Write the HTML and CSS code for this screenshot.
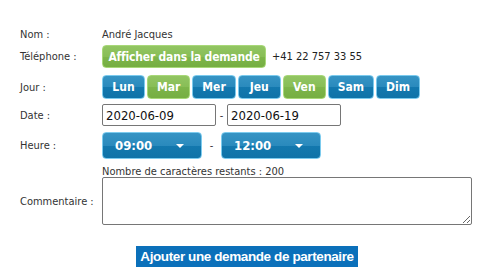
FILE: index.html
```html
<!DOCTYPE html>
<html>
<head>
  <meta charset="UTF-8" />
  <link rel="stylesheet" href="styles.css">
</head>
<body>
  <form class="demande" onsubmit="return false;">
    <div class="row row-nom">
      <span class="label">Nom :</span>
      <span class="value">André Jacques</span>
    </div>
    <div class="row row-tel">
      <span class="label">Téléphone :</span>
      <button type="button" class="btn green btn-tel">Afficher dans la demande</button>
      <span class="value phone">+41 22 757 33 55</span>
    </div>
    <div class="row row-jour">
      <span class="label">Jour :</span>
      <div class="days">
        <button type="button" class="btn blue day">Lun</button>
        <button type="button" class="btn green day">Mar</button>
        <button type="button" class="btn blue day">Mer</button>
        <button type="button" class="btn blue day">Jeu</button>
        <button type="button" class="btn green day">Ven</button>
        <button type="button" class="btn blue day">Sam</button>
        <button type="button" class="btn blue day">Dim</button>
      </div>
    </div>
    <div class="row row-date">
      <span class="label">Date :</span>
      <input type="text" class="date" value="2020-06-09">
      <span class="sep">-</span>
      <input type="text" class="date" value="2020-06-19">
    </div>
    <div class="row row-heure">
      <span class="label">Heure :</span>
      <div class="btn blue select"><span>09:00</span><span class="arrow"></span></div>
      <span class="sep sep-heure">-</span>
      <div class="btn blue select"><span>12:00</span><span class="arrow"></span></div>
    </div>
    <div class="row row-count">
      <span class="label"></span>
      <span class="value">Nombre de caractères restants : 200</span>
    </div>
    <div class="row row-comment">
      <span class="label">Commentaire :</span>
      <textarea class="comment"></textarea>
    </div>
    <div class="submit-wrap">
      <button type="submit" class="submit">Ajouter une demande de partenaire</button>
    </div>
  </form>
</body>
</html>
```

FILE: styles.css
```css
body {
    margin: 0;
    background-color: #fff;
    font-family: "DejaVu Sans Condensed", "DejaVu Sans", sans-serif;
    font-size: 11px;
    color: #333;
}

.demande {
    padding: 23px 0 0 20px;
}

.row {
    display: flex;
    align-items: center;
}

.label {
    width: 82px;
    flex: none;
}

.value {
    color: #333;
}

.row-nom {
    height: 22px;
}

.row-tel {
    height: 23px;
}

.row-jour {
    margin-top: 7px;
    height: 24px;
}

.row-date {
    margin-top: 5px;
    height: 22px;
}

.row-heure {
    margin-top: 6px;
    height: 27px;
}

.row-count {
    margin-top: 6px;
    height: 12px;
}

.row-comment {
    height: 48px;
}

.btn {
    box-sizing: border-box;
    font-family: "DejaVu Sans Condensed", "DejaVu Sans", sans-serif;
    font-weight: bold;
    font-size: 12px;
    color: #fff;
    border-radius: 4px;
    padding: 0;
    white-space: nowrap;
    cursor: pointer;
}

.blue {
    border: 1px solid #7ccbee;
    background: linear-gradient(to bottom, #3694c4 0%, #2a8abd 50%, #1378ae 52%, #0f73a8 100%);
}

.green {
    border: 1px solid #a8d878;
    background: linear-gradient(to bottom, #92c563 0%, #88be56 50%, #7db54a 52%, #76ae42 100%);
}

.btn-tel {
    height: 23px;
    width: 164px;
    letter-spacing: -0.2px;
}

.phone {
    margin-left: 6px;
    color: #222;
}

.days {
    display: flex;
    gap: 2px;
}

.day {
    height: 24px;
    padding: 0 9px;
    min-width: 43px;
}

.date {
    box-sizing: border-box;
    width: 114px;
    height: 22px;
    border: 1px solid #767676;
    border-radius: 2px;
    padding: 0 3px;
    font-family: "DejaVu Sans Condensed", "DejaVu Sans", sans-serif;
    font-size: 13px;
    color: #111;
}

.sep {
    width: 11px;
    text-align: center;
    color: #333;
}

.sep-heure {
    width: 19px;
}

.select {
    display: flex;
    align-items: center;
    justify-content: space-between;
    width: 100px;
    height: 27px;
    padding: 0 17px 0 12px;
    font-size: 13px;
}

.arrow {
    width: 0;
    height: 0;
    border-left: 4px solid transparent;
    border-right: 4px solid transparent;
    border-top: 4px solid #fff;
}

.comment {
    box-sizing: border-box;
    width: 370px;
    height: 48px;
    border: 1px solid #767676;
    border-radius: 2px;
    margin: 0;
}

.submit-wrap {
    margin: 21px 0 0 116px;
}

.submit {
    height: 21px;
    width: 222px;
    border: none;
    padding: 0;
    background-color: #0b70ba;
    color: #fff;
    font-family: "Liberation Sans", Arial, sans-serif;
    font-weight: bold;
    font-size: 13.5px;
    letter-spacing: -0.4px;
    white-space: nowrap;
    cursor: pointer;
}
```
